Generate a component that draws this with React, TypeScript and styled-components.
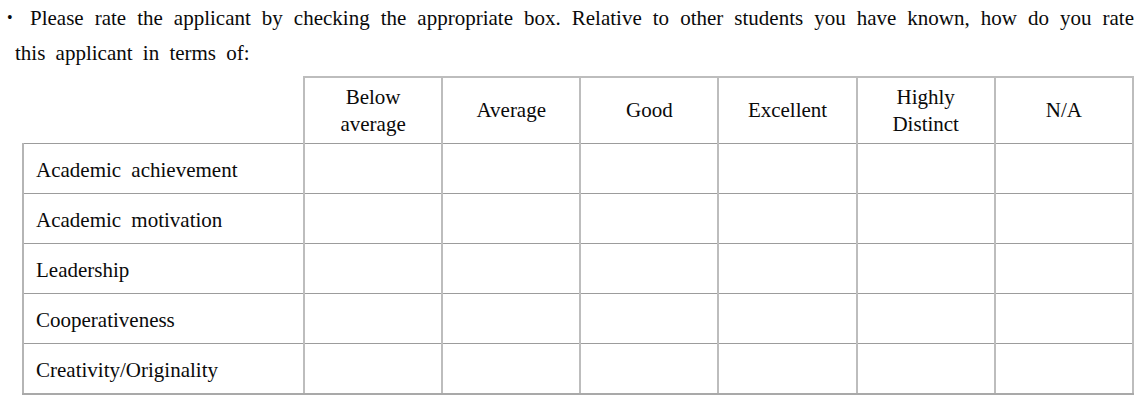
import React from "react";
import styled, { createGlobalStyle } from "styled-components";

const Global = createGlobalStyle`
  html, body { margin: 0; padding: 0; background: #ffffff; }
  body {
    font-family: "Liberation Serif", "Times New Roman", serif;
    color: #0a0a0a;
    font-size: 21px;
  }
`;

const Page = styled.div`
  width: 1147px;
  height: 400px;
  overflow: hidden;
`;

const Intro = styled.p`
  margin: 0;
  padding: 0 13px 0 15px;
  line-height: 35px;
  text-align: justify;
  word-spacing: 5px;
  text-indent: -8px;
`;

const Bullet = styled.span`
  display: inline-block;
  width: 23px;
  text-indent: 0;
  font-size: 16px;
  vertical-align: 2px;
`;

const Table = styled.table`
  margin: 5px 0 0 22px;
  width: 1112px;
  border-collapse: collapse;
  table-layout: fixed;
`;

const HeadCell = styled.th<{ $blank?: boolean }>`
  height: 65px;
  padding: 0 6px;
  font-weight: normal;
  text-align: center;
  vertical-align: middle;
  line-height: 27px;
  border-top: ${(p) => (p.$blank ? "none" : "2px solid #bdbdbd")};
  border-left: ${(p) => (p.$blank ? "none" : "2px solid #bdbdbd")};
  border-right: 2px solid #bdbdbd;
  border-bottom: 1px solid #9c9c9c;
`;

const Row = styled.tr`
  height: 50px;
  &:last-child td {
    border-bottom: 2px solid #a9a9a9;
  }
`;

const LabelCell = styled.td`
  padding: 4px 0 0 12px;
  line-height: 27px;
  word-spacing: 5px;
  vertical-align: middle;
  border-left: 2px solid #b5b5b5;
  border-right: 2px solid #bdbdbd;
  border-bottom: 1px solid #9c9c9c;
`;

const BoxCell = styled.td`
  border-left: 2px solid #bdbdbd;
  border-right: 2px solid #bdbdbd;
  border-bottom: 1px solid #9c9c9c;
`;

const columns: string[][] = [
  ["Below", "average"],
  ["Average"],
  ["Good"],
  ["Excellent"],
  ["Highly", "Distinct"],
  ["N/A"],
];

const criteria = [
  "Academic achievement",
  "Academic motivation",
  "Leadership",
  "Cooperativeness",
  "Creativity/Originality",
];

export default function App() {
  return (
    <Page>
      <Global />
      <Intro>
        <Bullet>•</Bullet>Please rate the applicant by checking the appropriate box.
        Relative to other students you have known, how do you rate this applicant in
        terms of:
      </Intro>
      <Table>
        <colgroup>
          <col style={{ width: 281 }} />
          {columns.map((_, i) => (
            <col key={i} />
          ))}
        </colgroup>
        <thead>
          <tr>
            <HeadCell $blank />
            {columns.map((lines, i) => (
              <HeadCell key={i}>
                {lines.map((l, j) => (
                  <React.Fragment key={j}>
                    {j > 0 && <br />}
                    {l}
                  </React.Fragment>
                ))}
              </HeadCell>
            ))}
          </tr>
        </thead>
        <tbody>
          {criteria.map((c) => (
            <Row key={c}>
              <LabelCell>{c}</LabelCell>
              {columns.map((_, i) => (
                <BoxCell key={i} />
              ))}
            </Row>
          ))}
        </tbody>
      </Table>
    </Page>
  );
}
